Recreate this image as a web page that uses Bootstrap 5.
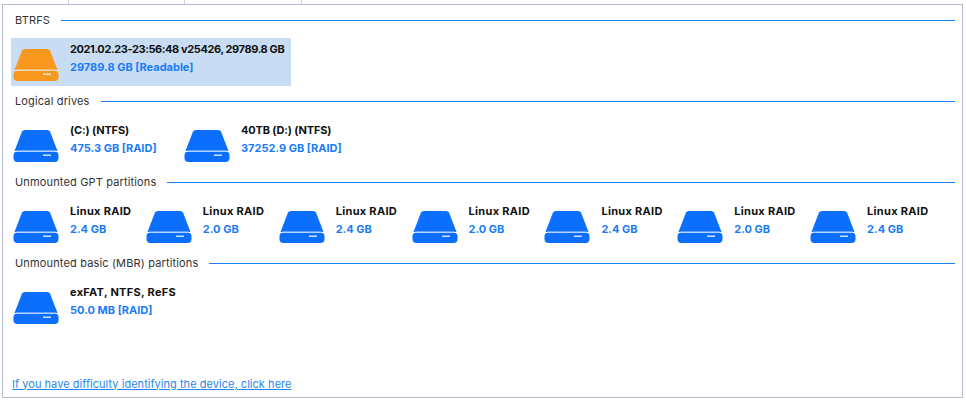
<!DOCTYPE html>
<html lang="en">
<head>
  <meta charset="UTF-8" />
  <title>Select device</title>
  <link href="https://cdn.jsdelivr.net/npm/bootstrap@5.3.2/dist/css/bootstrap.min.css" rel="stylesheet">
  <style>
    html, body { height: 402px; overflow: hidden; background: #fff; }
    body { font-family: Inter, "Noto Sans", sans-serif; font-size: 11px; color: #222; }
    .tab-stubs { height: 4px; }
    .tab-stub { height: 4px; border-right: 1px solid #ccd0d8; }
    .tab-a { width: 69px; }
    .tab-b { width: 116px; }
    .tab-c { width: 117px; }
    .drive-panel { margin: 0 3px 0 2px; height: 394px; border: 1px solid #b4bccb; }
    .section-head { height: 30px; margin: 0 7px 3px 12px; color: #333; letter-spacing: .15px; }
    .section-head::after { content: ""; flex: 1; height: 1px; margin-left: 11px; background: #1c7ff2; }
    .drive-tile { height: 48px; width: 132.85px; padding-left: 2px; }
    .drive-tile.wide { width: 171px; }
    .drive-tile.picked { width: 280px; background: #c8dcf4; }
    .drive-icon { width: 46px; height: 32px; margin-top: 11px; margin-right: 11px; flex-shrink: 0; }
    .drive-name { margin-top: 4px; font-weight: 700; color: #111; line-height: 14px; white-space: nowrap; letter-spacing: -.15px; }
    .name-tight { letter-spacing: -.4px; }
    .name-loose { letter-spacing: .3px; }
    .drive-size { margin-top: 4px; font-weight: 700; color: #1a7cf5; line-height: 14px; white-space: nowrap; }
    .help-link { margin: 0 0 5px 9px; color: #2a86ee; letter-spacing: .04px; }
  </style>
</head>
<body>
  <svg width="0" height="0" class="d-block">
    <symbol id="hdd" viewBox="0 0 46 32">
      <path d="M9 1.5 Q9.8 0 12 0 H34 Q36.2 0 37 1.5 L44.5 21 H1.5 Z" fill="currentColor"/>
      <rect x=".5" y="21.5" width="45" height="10.5" rx="4" fill="currentColor"/>
      <path d="M1.8 22 Q2.6 21 4.5 21 H41.5 Q43.4 21 44.2 22" fill="none" stroke="#fff" stroke-opacity=".75" stroke-width="1"/>
      <rect x="30" y="24.5" width="8" height="1.5" fill="#fff" fill-opacity=".8"/>
    </symbol>
  </svg>

  <div class="tab-stubs d-flex">
    <div class="tab-stub tab-a"></div>
    <div class="tab-stub tab-b"></div>
    <div class="tab-stub tab-c"></div>
  </div>

  <div class="drive-panel d-flex flex-column">
    <div class="section-head d-flex align-items-center">BTRFS</div>
    <div class="d-flex ps-2">
      <div class="drive-tile picked d-flex">
        <svg class="drive-icon" style="color:#f8981f"><use href="#hdd"/></svg>
        <div>
          <div class="drive-name name-tight">2021.02.23-23:56:48 v25426, 29789.8 GB</div>
          <div class="drive-size">29789.8 GB [Readable]</div>
        </div>
      </div>
    </div>

    <div class="section-head d-flex align-items-center">Logical drives</div>
    <div class="d-flex ps-2">
      <div class="drive-tile wide d-flex">
        <svg class="drive-icon" style="color:#0b6efd"><use href="#hdd"/></svg>
        <div><div class="drive-name">(C:) (NTFS)</div><div class="drive-size">475.3 GB [RAID]</div></div>
      </div>
      <div class="drive-tile wide d-flex">
        <svg class="drive-icon" style="color:#0b6efd"><use href="#hdd"/></svg>
        <div><div class="drive-name">40TB (D:) (NTFS)</div><div class="drive-size">37252.9 GB [RAID]</div></div>
      </div>
    </div>

    <div class="section-head d-flex align-items-center">Unmounted GPT partitions</div>
    <div class="d-flex ps-2">
      <div class="drive-tile d-flex"><svg class="drive-icon" style="color:#0b6efd"><use href="#hdd"/></svg><div><div class="drive-name name-loose">Linux RAID</div><div class="drive-size">2.4 GB</div></div></div>
      <div class="drive-tile d-flex"><svg class="drive-icon" style="color:#0b6efd"><use href="#hdd"/></svg><div><div class="drive-name name-loose">Linux RAID</div><div class="drive-size">2.0 GB</div></div></div>
      <div class="drive-tile d-flex"><svg class="drive-icon" style="color:#0b6efd"><use href="#hdd"/></svg><div><div class="drive-name name-loose">Linux RAID</div><div class="drive-size">2.4 GB</div></div></div>
      <div class="drive-tile d-flex"><svg class="drive-icon" style="color:#0b6efd"><use href="#hdd"/></svg><div><div class="drive-name name-loose">Linux RAID</div><div class="drive-size">2.0 GB</div></div></div>
      <div class="drive-tile d-flex"><svg class="drive-icon" style="color:#0b6efd"><use href="#hdd"/></svg><div><div class="drive-name name-loose">Linux RAID</div><div class="drive-size">2.4 GB</div></div></div>
      <div class="drive-tile d-flex"><svg class="drive-icon" style="color:#0b6efd"><use href="#hdd"/></svg><div><div class="drive-name name-loose">Linux RAID</div><div class="drive-size">2.0 GB</div></div></div>
      <div class="drive-tile d-flex"><svg class="drive-icon" style="color:#0b6efd"><use href="#hdd"/></svg><div><div class="drive-name name-loose">Linux RAID</div><div class="drive-size">2.4 GB</div></div></div>
    </div>

    <div class="section-head d-flex align-items-center">Unmounted basic (MBR) partitions</div>
    <div class="d-flex ps-2">
      <div class="drive-tile d-flex">
        <svg class="drive-icon" style="color:#0b6efd"><use href="#hdd"/></svg>
        <div><div class="drive-name name-loose">exFAT, NTFS, ReFS</div><div class="drive-size">50.0 MB [RAID]</div></div>
      </div>
    </div>

    <a href="#" class="help-link mt-auto">If you have difficulty identifying the device, click here</a>
  </div>
</body>
</html>
